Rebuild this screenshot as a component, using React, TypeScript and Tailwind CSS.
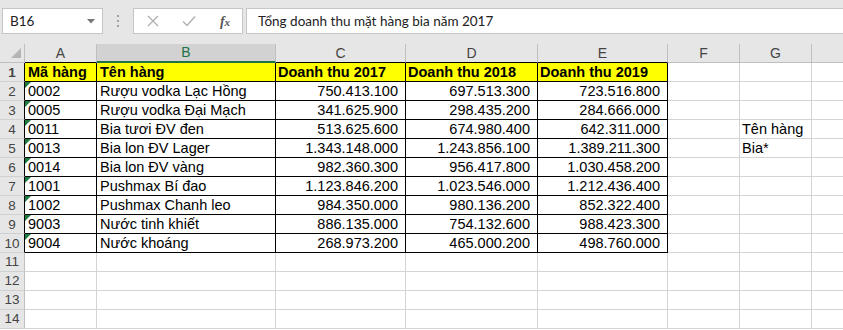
import React from "react";

type Row = [string, string, string, string, string, string?];

const rows: Row[] = [
  ["0002", "Rượu vodka Lạc Hồng", "750.413.100", "697.513.300", "723.516.800"],
  ["0005", "Rượu vodka Đại Mạch", "341.625.900", "298.435.200", "284.666.000"],
  ["0011", "Bia tươi ĐV đen", "513.625.600", "674.980.400", "642.311.000", "Tên hàng"],
  ["0013", "Bia lon ĐV Lager", "1.343.148.000", "1.243.856.100", "1.389.211.300", "Bia*"],
  ["0014", "Bia lon ĐV vàng", "982.360.300", "956.417.800", "1.030.458.200"],
  ["1001", "Pushmax Bí đao", "1.123.846.200", "1.023.546.000", "1.212.436.400"],
  ["1002", "Pushmax Chanh leo", "984.350.000", "980.136.200", "852.322.400"],
  ["9003", "Nước tinh khiết", "886.135.000", "754.132.600", "988.423.300"],
  ["9004", "Nước khoáng", "268.973.200", "465.000.200", "498.760.000"],
];

const font = { fontFamily: '"Liberation Sans", Arial, sans-serif' };
const uiFont = { fontFamily: 'Lato, "Noto Sans", sans-serif' };

function RowHdr({ n, dark }: { n: number; dark: boolean }) {
  return (
    <div
      className={`w-[25px] shrink-0 h-full bg-[#e6e6e6] border-r border-b ${
        dark ? "border-r-black" : "border-r-[#bfbfbf]"
      } border-b-[#d0d0d0] flex items-center justify-center text-[13.5px] text-[#444]`}
    >
      {n}
    </div>
  );
}

function Tri() {
  return (
    <svg className="absolute top-0 left-0" width="6" height="6" viewBox="0 0 6 6">
      <polygon points="0,0 6,0 0,6" fill="#1e7a3e" />
    </svg>
  );
}

export default function App() {
  return (
    <div className="w-[843px] h-[330px] overflow-hidden bg-white" style={font}>
      {/* Formula bar */}
      <div className="h-[44px] bg-[#e6e6e6] flex items-start pt-[8px]">
        <div
          className="ml-[2px] w-[101px] h-[26px] bg-white border border-[#c6c6c6] flex items-center justify-between pl-[7px] pr-[7px] text-[13.5px] text-[#222]"
          style={uiFont}
        >
          <span>B16</span>
          <svg width="8" height="5" viewBox="0 0 8 5">
            <polygon points="0,0 8,0 4,4.5" fill="#777" />
          </svg>
        </div>
        <div className="w-[30px] h-[26px] flex flex-col items-center justify-center gap-[3px]">
          <div className="w-[2px] h-[2px] bg-[#a0a0a0]" />
          <div className="w-[2px] h-[2px] bg-[#a0a0a0]" />
          <div className="w-[2px] h-[2px] bg-[#a0a0a0]" />
        </div>
        <div className="w-[110px] h-[26px] bg-white border border-[#c6c6c6] flex items-center">
          <div className="w-[38px] flex justify-center">
            <svg width="12" height="12" viewBox="0 0 12 12">
              <path d="M1 1 L11 11 M11 1 L1 11" stroke="#b0b0b0" strokeWidth="1.3" fill="none" />
            </svg>
          </div>
          <div className="w-[34px] flex justify-center">
            <svg width="14" height="12" viewBox="0 0 14 12">
              <path d="M1 6.5 L5 10.5 L13 1.5" stroke="#b0b0b0" strokeWidth="1.4" fill="none" />
            </svg>
          </div>
          <div
            className="w-[34px] flex justify-center pl-[4px] text-[14px] italic text-[#555] font-bold"
            style={{ fontFamily: '"Liberation Serif", "Times New Roman", serif' }}
          >
            <span>f</span>
            <span className="text-[11px] mt-[3px]">x</span>
          </div>
        </div>
        <div
          className="ml-[3px] flex-1 h-[26px] bg-white border border-[#c6c6c6] border-r-0 flex items-center pl-[11px] text-[13.5px] text-[#222]"
          style={uiFont}
        >
          Tổng doanh thu mặt hàng bia năm 2017
        </div>
      </div>

      {/* Column headers */}
      <div className="flex h-[19px] bg-[#e6e6e6] text-[14px] text-[#444]">
        <div className="w-[25px] shrink-0 h-full border-r border-b border-[#bfbfbf] relative">
          <svg className="absolute left-[10px] top-[4px]" width="12" height="11" viewBox="0 0 12 11">
            <polygon points="11,0 11,10 1,10" fill="#b4b4b4" />
          </svg>
        </div>
        <div className="w-[72px] shrink-0 h-full border-r border-r-[#bfbfbf] border-b border-b-black flex items-center justify-center">A</div>
        <div className="w-[179px] shrink-0 h-full bg-[#d2d2d2] border-r border-r-[#bfbfbf] border-b-2 border-b-[#217346] flex items-center justify-center text-[#217346]">B</div>
        <div className="w-[130px] shrink-0 h-full border-r border-r-[#bfbfbf] border-b border-b-black flex items-center justify-center">C</div>
        <div className="w-[132px] shrink-0 h-full border-r border-r-[#bfbfbf] border-b border-b-black flex items-center justify-center">D</div>
        <div className="w-[130px] shrink-0 h-full border-r border-r-[#bfbfbf] border-b border-b-black flex items-center justify-center">E</div>
        <div className="w-[72px] shrink-0 h-full border-r border-r-[#bfbfbf] border-b border-b-[#bfbfbf] flex items-center justify-center">F</div>
        <div className="w-[72px] shrink-0 h-full border-r border-r-[#bfbfbf] border-b border-b-[#bfbfbf] flex items-center justify-center">G</div>
        <div className="flex-1 h-full border-b border-b-[#bfbfbf]" />
      </div>

      {/* Row 1 */}
      <div className="flex h-[19px] text-[14.5px] leading-[17px] text-black font-bold">
        <RowHdr n={1} dark />
        <div className="w-[72px] shrink-0 h-full bg-[#ffff00] border-r border-b border-black flex items-end pl-[3px] whitespace-nowrap overflow-hidden">Mã hàng</div>
        <div className="w-[179px] shrink-0 h-full bg-[#ffff00] border-r border-b border-black flex items-end pl-[3px] whitespace-nowrap">Tên hàng</div>
        <div className="w-[130px] shrink-0 h-full bg-[#ffff00] border-r border-b border-black flex items-end pl-[2px] whitespace-nowrap">Doanh thu 2017</div>
        <div className="w-[132px] shrink-0 h-full bg-[#ffff00] border-r border-b border-black flex items-end pl-[2px] whitespace-nowrap">Doanh thu 2018</div>
        <div className="w-[130px] shrink-0 h-full bg-[#ffff00] border-r border-b border-black flex items-end pl-[2px] whitespace-nowrap">Doanh thu 2019</div>
        <div className="w-[72px] shrink-0 h-full border-r border-b border-[#d4d4d4]" />
        <div className="w-[72px] shrink-0 h-full border-r border-b border-[#d4d4d4]" />
        <div className="flex-1 h-full border-b border-[#d4d4d4]" />
      </div>

      {rows.map((r, i) => (
        <div key={i} className="flex h-[19px] text-[14.5px] leading-[17px] text-black">
          <RowHdr n={i + 2} dark />
          <div className="relative w-[72px] shrink-0 h-full border-r border-b border-black flex items-end pl-[3px] whitespace-nowrap">
            <Tri />
            {r[0]}
          </div>
          <div className="w-[179px] shrink-0 h-full border-r border-b border-black flex items-end pl-[3px] whitespace-nowrap">{r[1]}</div>
          <div className="w-[130px] shrink-0 h-full border-r border-b border-black flex items-end justify-end pr-[7px] whitespace-nowrap">{r[2]}</div>
          <div className="w-[132px] shrink-0 h-full border-r border-b border-black flex items-end justify-end pr-[7px] whitespace-nowrap">{r[3]}</div>
          <div className="w-[130px] shrink-0 h-full border-r border-b border-black flex items-end justify-end pr-[7px] whitespace-nowrap">{r[4]}</div>
          <div className="w-[72px] shrink-0 h-full border-r border-b border-[#d4d4d4]" />
          <div className="w-[72px] shrink-0 h-full border-r border-b border-[#d4d4d4] flex items-end pl-[2px] whitespace-nowrap">{r[5] ?? ""}</div>
          <div className="flex-1 h-full border-b border-[#d4d4d4]" />
        </div>
      ))}

      {[11, 12, 13, 14].map((n) => (
        <div key={n} className="flex h-[19px]">
          <RowHdr n={n} dark={false} />
          <div className="w-[72px] shrink-0 h-full border-r border-b border-[#d4d4d4]" />
          <div className="w-[179px] shrink-0 h-full border-r border-b border-[#d4d4d4]" />
          <div className="w-[130px] shrink-0 h-full border-r border-b border-[#d4d4d4]" />
          <div className="w-[132px] shrink-0 h-full border-r border-b border-[#d4d4d4]" />
          <div className="w-[130px] shrink-0 h-full border-r border-b border-[#d4d4d4]" />
          <div className="w-[72px] shrink-0 h-full border-r border-b border-[#d4d4d4]" />
          <div className="w-[72px] shrink-0 h-full border-r border-b border-[#d4d4d4]" />
          <div className="flex-1 h-full border-b border-[#d4d4d4]" />
        </div>
      ))}
    </div>
  );
}
